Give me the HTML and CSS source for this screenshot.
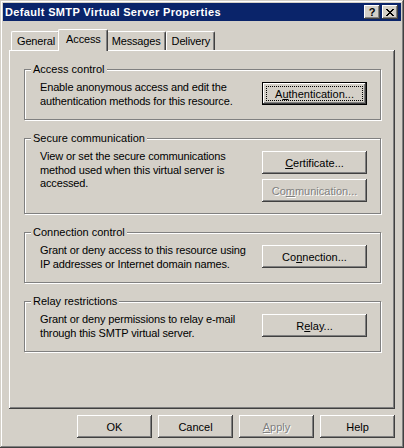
FILE: index.html
```html
<!DOCTYPE html>
<html lang="en">
<head>
<meta charset="utf-8">
<title>Default SMTP Virtual Server Properties</title>
<link rel="stylesheet" href="styles.css">
</head>
<body>
<div class="window">
  <div class="titlebar">
    <span class="title">Default SMTP Virtual Server Properties</span>
    <div class="caption-buttons">
      <button class="cap-btn help" type="button">?</button>
      <button class="cap-btn close" type="button" aria-label="Close">
        <svg width="8" height="7" viewBox="0 0 8 7" shape-rendering="crispEdges"><path fill="#000" d="M0 0h2v1H0zM6 0h2v1H6zM1 1h2v1H1zM5 1h2v1H5zM2 2h4v1H2zM3 3h2v1H3zM2 4h4v1H2zM1 5h2v1H1zM5 5h2v1H5zM0 6h2v1H0zM6 6h2v1H6z"/></svg>
      </button>
    </div>
  </div>

  <div class="tabs">
    <div class="tab">General</div>
    <div class="tab active">Access</div>
    <div class="tab">Messages</div>
    <div class="tab">Delivery</div>
  </div>

  <div class="panel">
    <div class="group">
      <div class="group-title">Access control</div>
      <div class="group-body">
        <p class="desc">Enable anonymous access and edit the<br>authentication methods for this resource.</p>
        <div class="actions">
          <button class="btn btn-default" type="button"><span class="focus">A<u>u</u>thentication...</span></button>
        </div>
      </div>
    </div>

    <div class="group">
      <div class="group-title">Secure communication</div>
      <div class="group-body">
        <p class="desc">View or set the secure communications<br>method used when this virtual server is<br>accessed.</p>
        <div class="actions">
          <button class="btn" type="button"><u>C</u>ertificate...</button>
          <button class="btn disabled" type="button" disabled>Co<u>m</u>munication...</button>
        </div>
      </div>
    </div>

    <div class="group">
      <div class="group-title">Connection control</div>
      <div class="group-body">
        <p class="desc">Grant or deny access to this resource using<br>IP addresses or Internet domain names.</p>
        <div class="actions">
          <button class="btn" type="button">Co<u>n</u>nection...</button>
        </div>
      </div>
    </div>

    <div class="group">
      <div class="group-title">Relay restrictions</div>
      <div class="group-body">
        <p class="desc">Grant or deny permissions to relay e-mail<br>through this SMTP virtual server.</p>
        <div class="actions">
          <button class="btn" type="button">R<u>e</u>lay...</button>
        </div>
      </div>
    </div>
  </div>

  <div class="dialog-buttons">
    <button class="btn btn-sm" type="button">OK</button>
    <button class="btn btn-sm" type="button">Cancel</button>
    <button class="btn btn-sm disabled" type="button" disabled><u>A</u>pply</button>
    <button class="btn btn-sm" type="button">Help</button>
  </div>
</div>
</body>
</html>
```

FILE: styles.css
```css
html, body {
  margin: 0;
  padding: 0;
}

body {
  background: #d4d0c8;
  font-family: "Liberation Sans", Arial, sans-serif;
  font-size: 11px;
  color: #000;
}

.window {
  width: 404px;
  height: 448px;
  box-sizing: border-box;
  padding: 3px;
  background: #d4d0c8;
  box-shadow:
    inset -1px -1px #404040,
    inset 1px 1px #d4d0c8,
    inset -2px -2px #808080,
    inset 2px 2px #ffffff;
}

/* Title bar */
.titlebar {
  height: 18px;
  background: #0a246a;
  display: flex;
  align-items: center;
  padding: 0 3px 0 2px;
}

.title {
  flex: 1;
  color: #fff;
  font-weight: bold;
  font-size: 11px;
  letter-spacing: 0.35px;
  white-space: nowrap;
}

.caption-buttons {
  display: flex;
  gap: 2px;
}

.cap-btn {
  width: 16px;
  height: 14px;
  padding: 0;
  margin: 0;
  border: none;
  background: #d4d0c8;
  display: flex;
  align-items: center;
  justify-content: center;
  font-family: "Liberation Sans", Arial, sans-serif;
  font-size: 11px;
  font-weight: bold;
  line-height: 14px;
  color: #000;
  box-shadow:
    inset -1px -1px #404040,
    inset 1px 1px #ffffff,
    inset -2px -2px #808080,
    inset 2px 2px #d4d0c8;
}

.cap-btn.close svg {
  display: block;
}

/* Tabs */
.tabs {
  display: flex;
  align-items: flex-end;
  height: 21px;
  margin: 8px 6px 0;
  padding-left: 2px;
  position: relative;
  z-index: 1;
}

.tab {
  height: 19px;
  box-sizing: border-box;
  padding: 2px 4px 0 5px;
  line-height: 14px;
  letter-spacing: -0.15px;
  white-space: nowrap;
  background: #d4d0c8;
  border-top: 1px solid #fff;
  border-left: 1px solid #fff;
  border-right: 1px solid #404040;
  box-shadow: inset -1px 0 #808080;
  border-top-left-radius: 2px;
  border-top-right-radius: 2px;
}

.tab.active {
  height: 22px;
  margin: 0 -2px -1px;
  padding: 2px 6px 0 7px;
  position: relative;
  z-index: 2;
}

/* Panel */
.panel {
  margin: 0 6px;
  height: 359px;
  box-sizing: border-box;
  padding: 19px 14px 0 15px;
  display: flex;
  flex-direction: column;
  gap: 18px;
  box-shadow:
    inset -1px -1px #404040,
    inset 1px 1px #ffffff,
    inset -2px -2px #808080;
}

/* Group boxes */
.group {
  border: 1px solid #808080;
  box-shadow: inset 1px 1px #ffffff, 1px 1px #ffffff;
  padding: 0 0 11px;
}

.group-title {
  width: fit-content;
  margin: -7px 0 0 6px;
  padding: 0 2px;
  height: 13px;
  line-height: 13px;
  background: #d4d0c8;
  white-space: nowrap;
}

.group-body {
  display: flex;
  align-items: flex-start;
  margin-top: 5px;
  padding: 0 13px 0 15px;
}

.desc {
  flex: 1;
  margin: 0;
  line-height: 13.5px;
  letter-spacing: -0.15px;
  white-space: nowrap;
}

.actions {
  display: flex;
  flex-direction: column;
  gap: 5px;
  margin-top: 1px;
}

/* Buttons */
.btn {
  width: 105px;
  height: 23px;
  box-sizing: border-box;
  margin: 0;
  padding: 0;
  border: none;
  background: #d4d0c8;
  font-family: "Liberation Sans", Arial, sans-serif;
  font-size: 11px;
  color: #000;
  display: flex;
  align-items: center;
  justify-content: center;
  white-space: nowrap;
  box-shadow:
    inset -1px -1px #404040,
    inset 1px 1px #ffffff,
    inset -2px -2px #808080,
    inset 2px 2px #d4d0c8;
}

.btn-default {
  padding: 4px;
  box-shadow:
    inset 0 0 0 1px #000000,
    inset -2px -2px #404040,
    inset 2px 2px #ffffff,
    inset -3px -3px #808080,
    inset 3px 3px #d4d0c8;
}

.btn-default .focus {
  flex: 1;
  align-self: stretch;
  display: flex;
  align-items: center;
  justify-content: center;
  border: 1px dotted #000;
}

.btn.disabled {
  color: #808080;
  text-shadow: 1px 1px 0 #ffffff;
}

.btn u {
  text-decoration: underline;
  text-underline-offset: 1px;
}

.dialog-buttons {
  display: flex;
  justify-content: flex-end;
  gap: 6px;
  margin: 6px 6px 0;
}

.btn-sm {
  width: 75px;
}
```
